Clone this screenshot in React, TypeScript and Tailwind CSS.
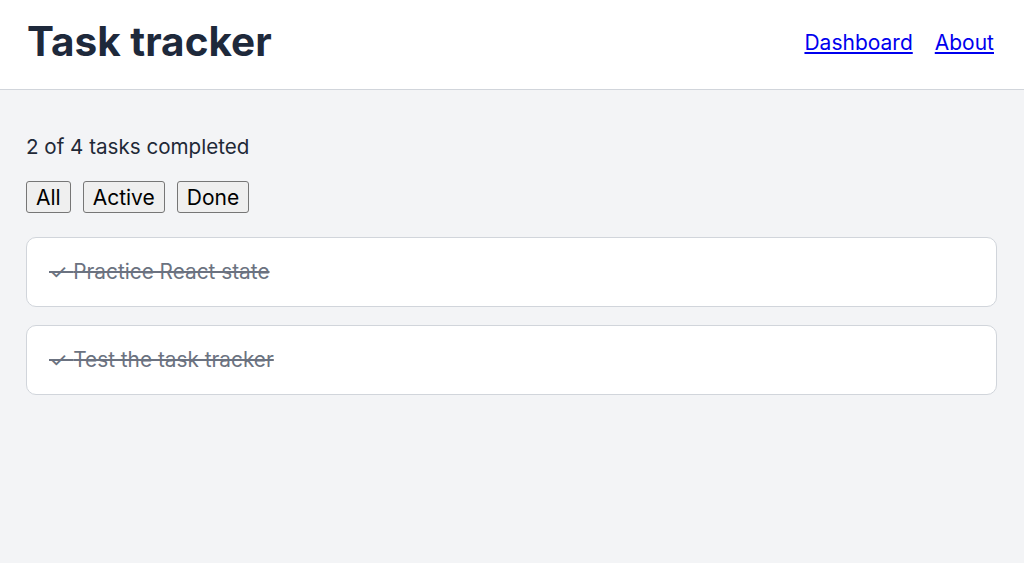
const tasks = [
  { id: 1, title: "Practice React state", done: true },
  { id: 2, title: "Test the task tracker", done: true },
];

export default function App() {
  return (
    <div className="min-h-[563px] bg-[#f3f4f6] font-['Inter',sans-serif] text-[#1f2937]">
      <header className="flex h-[90px] items-center justify-between border-b border-[#d1d5db] bg-white pb-[4px] pl-[27px] pr-[30px]">
        <h1 className="text-[40.5px] font-bold leading-none text-[#1e293b]">Task tracker</h1>
        <nav className="flex gap-[22px] text-[21px] text-[#0000ee]">
          <a href="#" className="underline">
            Dashboard
          </a>
          <a href="#" className="underline">
            About
          </a>
        </nav>
      </header>

      <main className="pl-[26px] pr-[27px] pt-[41px]">
        <p className="text-[20.6px] leading-[32px] text-[#1f2937]">2 of 4 tasks completed</p>

        <div className="mt-[18px] flex gap-[12px]">
          {["All", "Active", "Done"].map((f) => (
            <button
              key={f}
              className="h-[32px] rounded-[3px] border border-[#767676] bg-[#efefef] px-[9px] text-[21px] leading-none text-black"
            >
              {f}
            </button>
          ))}
        </div>

        <ul className="mt-[24px] flex flex-col gap-[18px]">
          {tasks.map((t) => (
            <li
              key={t.id}
              className="flex h-[70px] items-center rounded-[10px] border border-[#d1d5db] bg-white px-[22px]"
            >
              <span className="text-[20.8px] text-[#6b7280] line-through">
                {t.done ? "✓ " : ""}
                {t.title}
              </span>
            </li>
          ))}
        </ul>
      </main>
    </div>
  );
}
